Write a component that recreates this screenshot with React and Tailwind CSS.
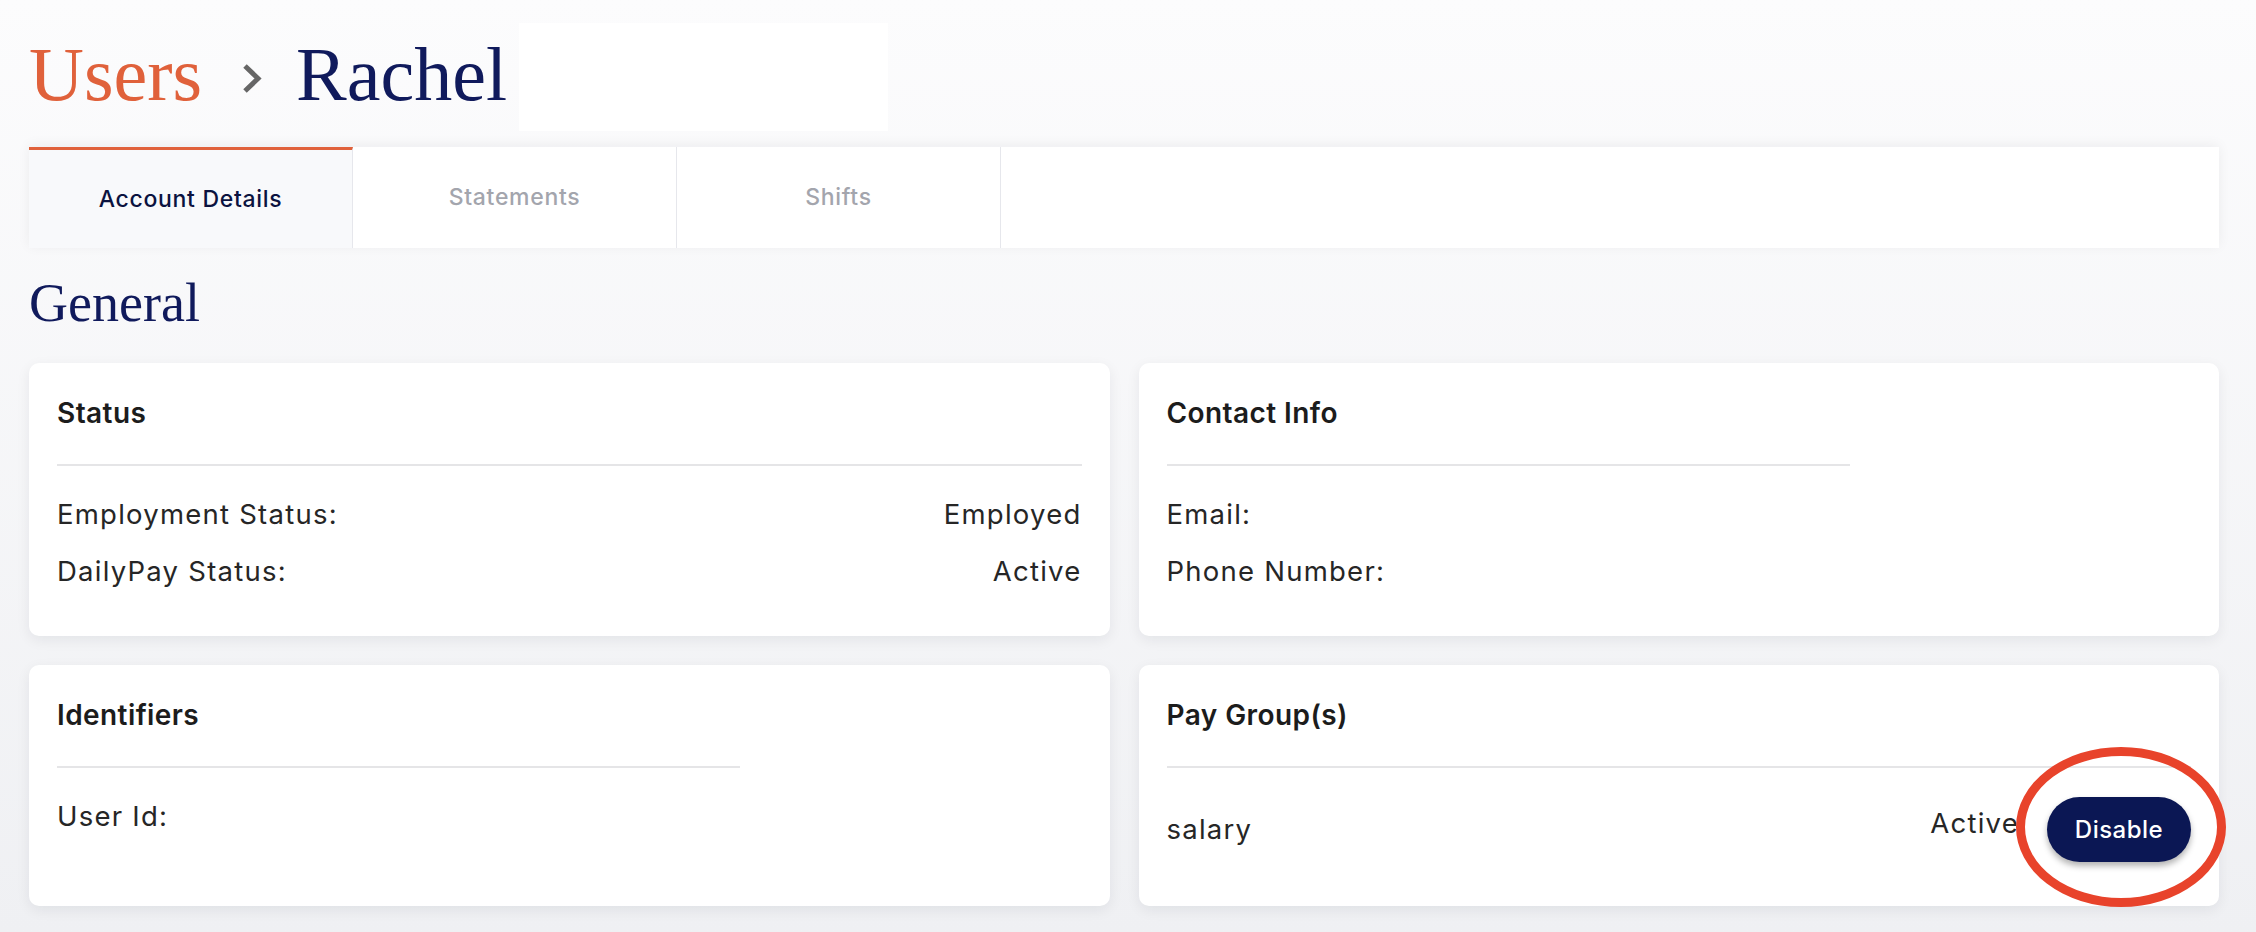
import React from 'react';

const serif = { fontFamily: '"Liberation Serif", "Times New Roman", serif' };

const tabs = ['Account Details', 'Statements', 'Shifts'];

function Card({ title, dividerClass = 'w-full', children }) {
    return (
        <div className="bg-white rounded-[10px] shadow-[0_4px_14px_rgba(20,24,40,0.07)] px-[28px] pt-[30px] pb-[44px] flex flex-col">
            <h3 className="h-[40px] leading-[40px] text-[28px] font-semibold tracking-[0.015em] text-[#1c1c1c]">{title}</h3>
            <div className={`${dividerClass} h-[2px] bg-[#e5e5e7] mt-[31px] mb-[29px]`} />
            <div className="flex flex-col gap-[17px]">{children}</div>
        </div>
    );
}

function Row({ label, value }) {
    return (
        <div className="flex justify-between items-center h-[40px] text-[27.5px] tracking-[0.045em] text-[#262626]">
            <span>{label}</span>
            {value && <span>{value}</span>}
        </div>
    );
}

export default function App() {
    return (
        <div className="min-h-screen w-full bg-linear-to-b from-[#fcfcfd] to-[#eff0f3] pl-[29px] pr-[37px] pt-[23px] pb-[27px]" style={{ fontFamily: 'Inter, "Noto Sans", sans-serif' }}>
            {/* breadcrumb */}
            <div className="flex items-start">
                <div className="flex items-center mt-[13px] h-[76px]" style={serif}>
                    <span className="text-[76px] leading-none text-[#e0613b]">Users</span>
                    <svg width="20" height="31" viewBox="0 0 20 31" className="ml-[40px] mr-[34px] mt-[8px]">
                        <polyline points="3,3 16,15.5 3,28" fill="none" stroke="#666" strokeWidth="5" />
                    </svg>
                    <span className="text-[76px] leading-none text-[#101a5c]">Rachel</span>
                </div>
                <div className="ml-[12px] w-[369px] h-[108px] bg-white" />
            </div>

            {/* tabs */}
            <div className="mt-[16px] h-[101px] bg-white flex shadow-[0_-2px_12px_rgba(20,24,40,0.06)]">
                {tabs.map((t, i) => (
                    <div
                        key={t}
                        className={`w-[324px] h-full flex items-center justify-center border-r border-[#e6e7ec] text-[23px] font-medium tracking-[0.03em] ${i === 0 ? 'bg-[#f8f9fb] border-t-[3px] border-t-[#e0613b] text-[#0b1340]' : 'text-[#a3a5ad]'}`}
                    >
                        {t}
                    </div>
                ))}
            </div>

            <h2 className="mt-[28px] text-[54px] leading-none text-[#101a5c]" style={serif}>General</h2>

            <div className="mt-[33px] grid grid-cols-2 gap-[29px]">
                <Card title="Status">
                    <Row label="Employment Status:" value="Employed" />
                    <Row label="DailyPay Status:" value="Active" />
                </Card>
                <Card title="Contact Info" dividerClass="w-2/3">
                    <Row label="Email:" />
                    <Row label="Phone Number:" />
                </Card>
                <Card title="Identifiers" dividerClass="w-2/3">
                    <Row label="User Id:" />
                </Card>
                <Card title="Pay Group(s)">
                    <div className="flex justify-between items-center h-[65px] text-[27.5px] tracking-[0.045em] text-[#262626]">
                        <span>salary</span>
                        <div className="flex items-center">
                            <span className="mb-[12px]">Active</span>
                            <div className="relative ml-[28px]">
                                <button className="w-[144px] h-[65px] rounded-full bg-[#0b1754] text-white text-[24px] font-medium tracking-[0.02em] shadow-[0_4px_6px_rgba(0,0,0,0.3)]">
                                    Disable
                                </button>
                                <div className="absolute left-[-31px] top-[-50px] w-[210px] h-[160px] rounded-[50%] border-[9px] border-[#e8432b] pointer-events-none" />
                            </div>
                        </div>
                    </div>
                </Card>
            </div>
        </div>
    );
}
